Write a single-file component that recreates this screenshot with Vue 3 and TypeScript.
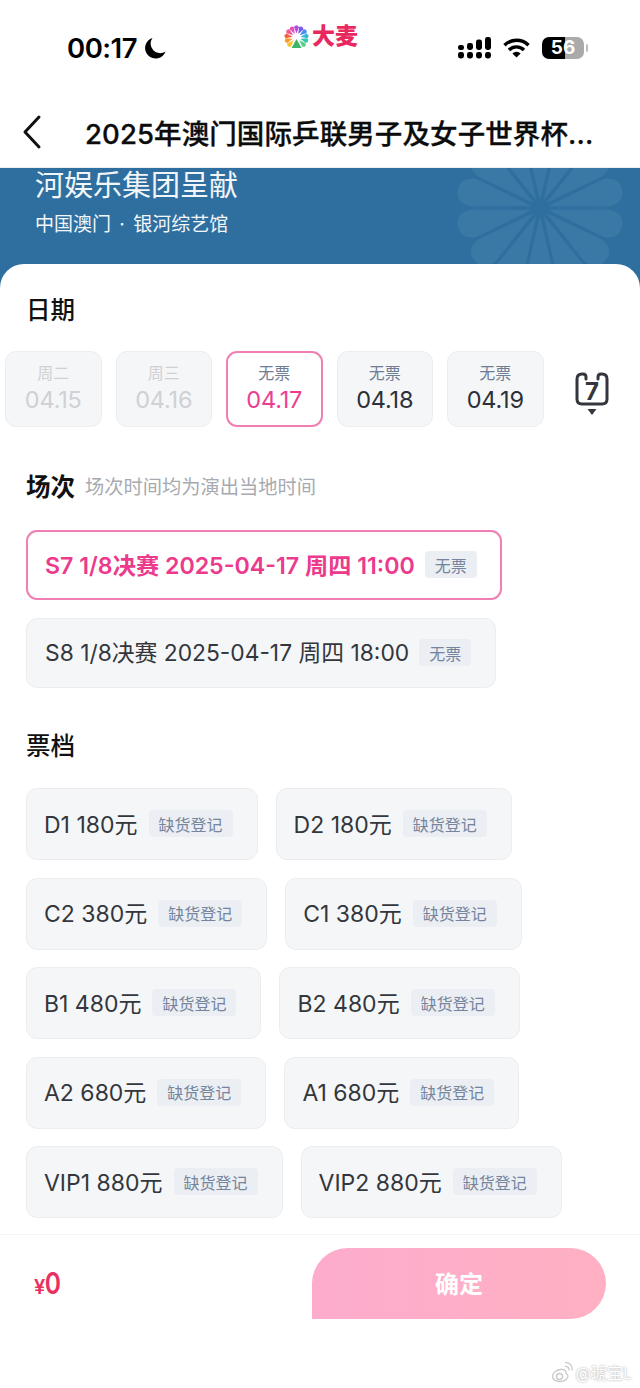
<template>
	<div class="page">
		<header class="status">
			<div class="clock">
				<span>00:17</span>
				<svg class="moon" width="22" height="22" viewBox="0 0 22 22">
					<path d="M8.5 1A10.5 10.5 0 1 0 21.5 14.5 9.5 9.5 0 0 1 8.5 1Z" fill="#000" />
				</svg>
			</div>
			<div class="status-right">
				<svg width="33" height="22" viewBox="0 0 33 22">
					<rect x="0" y="15" width="6" height="6.5" rx="2.4" />
					<rect x="9" y="15" width="6" height="6.5" rx="2.4" />
					<rect x="18" y="15" width="6" height="6.5" rx="2.4" />
					<rect x="27" y="15" width="6" height="6.5" rx="2.4" />
					<rect x="0" y="8" width="6" height="5" rx="2.2" />
					<rect x="9" y="6" width="6" height="7" rx="2.4" />
					<rect x="18" y="2.5" width="6" height="10.5" rx="2.4" />
					<rect x="27" y="0" width="6" height="13" rx="2.4" />
				</svg>
				<svg width="27" height="20" viewBox="0 0 27 20" fill="none" stroke="#000" stroke-width="3.4">
					<path d="M1.5 7.2a17 17 0 0 1 24 0" />
					<path d="M6 12a10.5 10.5 0 0 1 15 0" />
					<path d="M13.5 19.5 9.4 15.4a5.8 5.8 0 0 1 8.2 0Z" fill="#000" stroke="none" />
				</svg>
				<div class="battery"><span>56</span></div>
			</div>
			<div class="logo">
				<svg width="27" height="25" viewBox="-13.5 -13.5 27 25">
					<path
						v-for="(p, i) in petals"
						:key="i"
						d="M0 -4 L-2.500 -10.500 Q0 -14 2.500 -10.500 Z"
						:fill="p"
						:transform="`rotate(${i * 27 - 135})`"
					/>
					<path d="M0 1.500 L-5 10.500 H5 Z" fill="#3fb56b" />
				</svg>
				<span>大麦</span>
			</div>
		</header>

		<nav class="nav">
			<svg class="back" width="20" height="36" viewBox="0 0 20 36" fill="none" stroke="#111" stroke-width="3" stroke-linecap="round" stroke-linejoin="round">
				<path d="M17 3 3 18l14 15" />
			</svg>
			<div class="nav-title">2025年澳门国际乒联男子及女子世界杯...</div>
		</nav>

		<section class="hero">
			<svg class="flower" width="180" height="120" viewBox="-90 -40 180 120">
				<path
					v-for="n in 14"
					:key="n"
					d="M0 -8 L-14 -68 Q-14 -84 0 -84 Q14 -84 14 -68 Z"
					fill="#3a78a5"
					:transform="`rotate(${n * (360 / 14)})`"
				/>
			</svg>
			<div class="hero-title">河娱乐集团呈献</div>
			<div class="hero-sub">中国澳门 · 银河综艺馆</div>
		</section>

		<main class="sheet">
			<h2 class="title date-title">日期</h2>
			<div class="dates">
				<div
					v-for="d in dates"
					:key="d.date"
					class="date"
					:class="{ off: d.off, on: d.on }"
				>
					<span class="date-top">{{ d.top }}</span>
					<span class="date-num">{{ d.date }}</span>
				</div>
				<svg class="cal" width="34" height="44" viewBox="0 0 34 44">
					<path
						d="M11 7V5Q11 2 8 2H7Q2 2 2 7V27Q2 32 7 32H27Q32 32 32 27V7Q32 2 27 2H26Q23 2 23 5V7"
						fill="none"
						stroke="#33363c"
						stroke-width="3"
						stroke-linecap="round"
					/>
					<text x="17" y="27.500" text-anchor="middle" class="cal-num">7</text>
					<path d="M12.500 37H21.500L17 43Z" fill="#33363c" />
				</svg>
			</div>

			<div class="session-head">
				<h2 class="title bold">场次</h2>
				<span class="hint">场次时间均为演出当地时间</span>
			</div>
			<div class="sessions">
				<div v-for="s in sessions" :key="s.text" class="session" :class="{ on: s.on }">
					<span class="label">{{ s.text }}</span>
					<span class="tag none">无票</span>
				</div>
			</div>

			<h2 class="title ticket-title">票档</h2>
			<div class="tickets">
				<div v-for="t in tickets" :key="t" class="ticket">
					<span class="label">{{ t }}</span>
					<span class="tag">缺货登记</span>
				</div>
			</div>
		</main>

		<footer class="footer">
			<div class="price"><small>¥</small><span class="zero">0</span></div>
			<button class="confirm">确定</button>
		</footer>

		<div class="mark">
			<svg width="22" height="22" viewBox="0 0 22 22" fill="none" stroke="#c9c9c9" stroke-width="1.300">
				<path d="M9 8.500C4.500 9.500 1.500 12.500 1.500 15.500 1.500 18.500 5 20.500 9 20.500 13.500 20.500 17 18 17 15 17 13 14.500 12.800 14.800 11.500 15 9.500 13 8 9 8.500Z" />
				<circle cx="8.500" cy="15.500" r="3" />
				<path d="M14 5.500C16.500 5 18.500 7 18 9.500" />
				<path d="M14 1.800C18.500 1 22 5 21 9.500" />
			</svg>
			<span>@琥宝L</span>
		</div>
	</div>
</template>

<script setup lang="ts">
// fan colours, from lower left going clockwise
const petals = ["#f7c531", "#f79a31", "#f2603f", "#f25a93", "#e64fc0", "#b04fe0", "#7a5ae8", "#4d8cf0", "#35b6e0", "#35c8b0", "#5fd08a"];

interface DateItem {
	top: string;
	date: string;
	off?: boolean;
	on?: boolean;
}

const dates: DateItem[] = [
	{ top: "周二", date: "04.15", off: true },
	{ top: "周三", date: "04.16", off: true },
	{ top: "无票", date: "04.17", on: true },
	{ top: "无票", date: "04.18" },
	{ top: "无票", date: "04.19" },
];

const sessions = [
	{ text: "S7 1/8决赛 2025-04-17 周四 11:00", on: true },
	{ text: "S8 1/8决赛 2025-04-17 周四 18:00", on: false },
];

const tickets = [
	"D1 180元",
	"D2 180元",
	"C2 380元",
	"C1 380元",
	"B1 480元",
	"B2 480元",
	"A2 680元",
	"A1 680元",
	"VIP1 880元",
	"VIP2 880元",
];
</script>

<style>
html,
body {
	background: #fff;
}
</style>

<style scoped>
.page {
	position: relative;
	width: 640px;
	height: 1388px;
	overflow: hidden;
	background: #fff;
	font-family: Inter, "Noto Sans CJK SC", sans-serif;
	color: #33363c;
}

.status {
	position: relative;
	display: flex;
	justify-content: space-between;
	align-items: center;
	height: 96px;
	padding: 0 56px 0 67px;
	color: #000;
}

.clock {
	display: flex;
	align-items: center;
	gap: 7px;
	font-size: 27.500px;
	font-weight: 600;
	letter-spacing: -0.5px;
}

.status-right {
	display: flex;
	align-items: center;
	gap: 12px;
}

.battery {
	position: relative;
	width: 42px;
	height: 22px;
	border-radius: 7px;
	background: linear-gradient(90deg, #000 55%, #aaa 55%);
	text-align: center;
	color: #fff;
	font-size: 19px;
	font-weight: 700;
	line-height: 22px;
}

.battery::after {
	content: "";
	position: absolute;
	right: -4px;
	top: 7px;
	width: 2px;
	height: 8px;
	border-radius: 0 2px 2px 0;
	background: #bbb;
}

.logo {
	position: absolute;
	left: 283px;
	top: 23px;
	display: flex;
	align-items: center;
	gap: 2px;
	color: #e8285f;
	font-size: 23px;
	font-weight: 900;
	line-height: 26px;
}

.nav {
	display: flex;
	align-items: center;
	height: 72px;
	padding-left: 22px;
	border-bottom: 1px solid #e9eef1;
	box-sizing: border-box;
}

.nav-title {
	margin-left: 43px;
	font-size: 27.500px;
	font-weight: 500;
	letter-spacing: 0.1px;
	color: #0c0c0c;
	white-space: nowrap;
	-webkit-text-stroke: 0.3px #0c0c0c;
}

.hero {
	position: relative;
	height: 120px;
	padding-left: 35px;
	overflow: hidden;
	background: #2f6f9f;
	color: #f2f6f9;
}

.flower {
	position: absolute;
	left: 450px;
	top: 0;
}

.hero-title {
	position: relative;
	font-size: 29px;
	line-height: 36px;
}

.hero-sub {
	position: relative;
	margin-top: 6px;
	font-size: 19px;
	line-height: 30px;
	word-spacing: 3px;
}

.sheet {
	position: relative;
	margin-top: -24px;
	height: 970px;
	box-sizing: border-box;
	padding-top: 28px;
	border-radius: 24px 24px 0 0;
	background: #fff;
}

.title {
	margin: 0;
	font-size: 24.500px;
	font-weight: 500;
	line-height: 36px;
	color: #111;
}

.date-title,
.ticket-title {
	padding-left: 26px;
}

.bold {
	font-weight: 700;
}

.dates {
	display: flex;
	align-items: flex-start;
	gap: 14px;
	margin-top: 23px;
	padding-left: 5px;
}

.date {
	display: flex;
	flex-direction: column;
	align-items: center;
	justify-content: center;
	box-sizing: border-box;
	width: 96.500px;
	height: 76px;
	border: 1px solid #ebedf0;
	border-radius: 11px;
	background: #f5f6f8;
}

.date-top {
	font-size: 16px;
	line-height: 22px;
	color: #6f7d95;
}

.date-num {
	font-size: 23.500px;
	line-height: 32px;
	color: #2d3038;
	letter-spacing: -0.2px;
}

.date.off .date-top,
.date.off .date-num {
	color: #cfd1d4;
}

.date.on {
	border: 2px solid #f07fb3;
	background: #fff;
}

.date.on .date-num {
	color: #ec3d8f;
}

.cal {
	margin: 21px 0 0 17px;
}

.cal-num {
	font-size: 24px;
	font-weight: 700;
	fill: #33363c;
}

.session-head {
	display: flex;
	align-items: center;
	gap: 10px;
	margin-top: 42px;
	padding-left: 26px;
}

.hint {
	margin-bottom: 2px;
	font-size: 19.250px;
	color: #a7aab0;
}

.sessions {
	display: flex;
	flex-direction: column;
	align-items: flex-start;
	gap: 18px;
	margin-top: 25px;
	padding-left: 26px;
}

.session {
	display: flex;
	align-items: center;
	gap: 10px;
	box-sizing: border-box;
	height: 70px;
	padding: 0 24px 0 18px;
	border: 1px solid #ebedf0;
	border-radius: 11px;
	background: #f5f6f8;
	font-size: 22.800px;
	white-space: nowrap;
}

.session.on {
	border: 2px solid #f07fb3;
	padding: 0 23px 0 17px;
	background: #fff;
	color: #ec3a8c;
	font-size: 23.200px;
	font-weight: 600;
}

.label {
	padding-bottom: 3px;
}

.tag {
	display: inline-flex;
	align-items: center;
	justify-content: center;
	height: 27px;
	width: 84px;
	margin-bottom: 1px;
	border-radius: 4px;
	background: #ebeff3;
	font-size: 16px;
	font-weight: 400;
	color: #76849d;
	white-space: nowrap;
}

.tag.none {
	width: 52px;
}

.ticket-title {
	margin-top: 40px;
}

.tickets {
	display: flex;
	flex-wrap: wrap;
	gap: 17.500px 18px;
	width: 590px;
	margin-top: 24px;
	padding-left: 26px;
}

.ticket {
	display: flex;
	align-items: center;
	gap: 11px;
	box-sizing: border-box;
	height: 72px;
	padding: 0 24px 0 17px;
	border: 1px solid #ebedf0;
	border-radius: 11px;
	background: #f5f6f8;
	font-size: 23px;
	white-space: nowrap;
}

.footer {
	display: flex;
	justify-content: space-between;
	align-items: center;
	box-sizing: border-box;
	height: 86px;
	padding: 12px 34px 0;
	border-top: 1px solid #f4f4f4;
}

.price {
	display: flex;
	align-items: baseline;
	margin-top: 2px;
	font-weight: 600;
	line-height: 40px;
	color: #e8315f;
}

.price small {
	font-size: 20px;
}

.zero {
	display: inline-block;
	margin-left: -2px;
	font-size: 30px;
	transform: scaleX(0.82);
}

.confirm {
	width: 294px;
	height: 71px;
	padding-bottom: 4px;
	border: 0;
	border-radius: 36px 36px 36px 0;
	background: linear-gradient(90deg, #fdaccd, #ffb0c2);
	color: #fff;
	font-family: inherit;
	font-size: 24px;
	font-weight: 700;
}

.mark {
	position: absolute;
	right: 8px;
	bottom: 4px;
	display: flex;
	align-items: center;
	gap: 2px;
	font-size: 16px;
	color: #fff;
	text-shadow: 0 0 2px #999;
}
</style>
